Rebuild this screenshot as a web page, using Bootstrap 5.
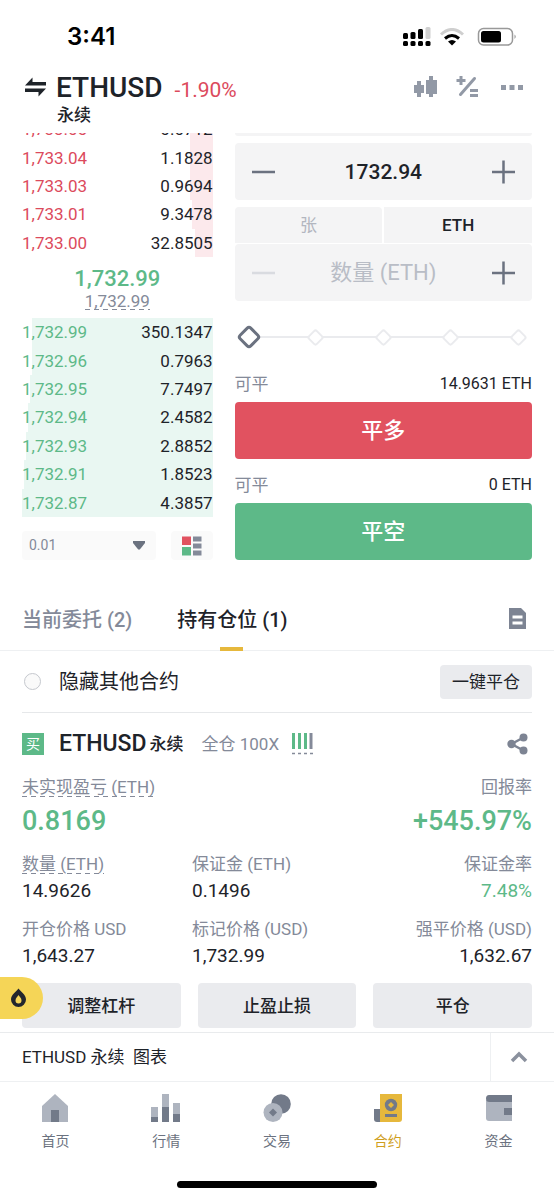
<!DOCTYPE html>
<html lang="zh-CN">
<head>
<meta charset="utf-8">
<meta name="viewport" content="width=device-width, initial-scale=1">
<title>ETHUSD 永续</title>
<link href="https://cdn.jsdelivr.net/npm/bootstrap@5.3.0/dist/css/bootstrap.min.css" rel="stylesheet">
<style>
  :root { --ink:#1e2329; --grey:#848a99; --slate:#6b7280; --up:#5db988; --down:#e15260; --gold:#e6b83c; --field:#f4f4f5; --chip:#eaebee; --line:#eef0f2; }
  body { font-family: Roboto, "Noto Sans CJK SC", sans-serif; font-size:17px; line-height:24px; color:var(--ink); background:#fff; }
  button, input, select { font-family:inherit; }
  svg { display:block; flex:none; }
  .px-page { padding-left:22px; padding-right:22px; }
  .t-grey { color:var(--grey); } .t-up { color:var(--up); } .t-down { color:#dc4a5c; }
  .bare { border:0; background:none; padding:0; color:inherit; }
  .statusbar { height:74px; padding:0 37px 0 67px; }
  .clock { font-family:Inter, sans-serif; font-weight:600; font-size:24px; color:#000; }
  .pair { font-size:28px; line-height:28px; font-weight:500; }
  .change { font-size:21px; line-height:24px; padding-top:4px; }
  .kind { line-height:26px; padding-left:35px; }

  .trade { display:grid; grid-template-columns: minmax(0,191fr) minmax(0,298fr); column-gap:22px; padding-top:5px; }
  .asks { height:124px; overflow:hidden; display:flex; flex-direction:column; justify-content:flex-end; }
  .asks .levels { height:142px; flex:none; }
  .bids .levels { height:199px; }
  .levels { display:flex; flex-direction:column; }
  .level { position:relative; flex:1 1 0; display:flex; align-items:center; justify-content:space-between; }
  .level span { position:relative; }
  .depth { position:absolute; top:0; bottom:0; right:0; }
  .asks .depth { background:#fce9ec; } .bids .depth { background:#e9f7f2; }
  .midprice { height:61px; padding-top:8px; }
  .midprice .last { font-size:22px; line-height:28px; font-weight:500; }
  .hint { display:inline-block; line-height:18px; padding-bottom:1px; background:repeating-linear-gradient(90deg, var(--grey) 0 5px, transparent 5px 9px) bottom / 100% 1px no-repeat; }
  .midprice .hint { line-height:16px; }
  .tools { margin-top:14px; gap:15px; }
  .tools select { height:29px; border:0; border-radius:4px; background-color:#fafafa; color:var(--grey); font-size:14px; padding:0 30px 0 7px; line-height:29px;
    background-image:url("data:image/svg+xml,%3csvg xmlns='http://www.w3.org/2000/svg' viewBox='0 0 12 9'%3e%3cpath d='M0 0h12v2L6.800 8.500H5.200L0 2z' fill='%236b7280'/%3e%3c/svg%3e"); background-position:right 11px center; background-size:12px 9px; background-repeat:no-repeat; appearance:none; }
  .tools button { width:42px; height:29px; background:#fafafa; border-radius:4px; }

  .strip { height:3px; background:var(--field); border-radius:0 0 4px 4px; margin-bottom:7px; }
  .stepper { height:57px; background:var(--field); border-radius:4px; padding:0 16px; }
  .stepper input { flex:1; min-width:0; border:0; background:none; text-align:center; font-size:21px; font-weight:500; color:var(--ink); outline:0; padding:0; }
  .stepper input::placeholder { color:#b9bdc6; font-size:22px; font-weight:400; opacity:1; }
  .units { height:36px; gap:2px; margin:7px 0 1px; }
  .units button { flex:1; background:var(--field); font-size:17px; color:#b2b6bf; }
  .units .on { color:var(--ink); font-weight:500; }
  .scale { position:relative; height:30px; margin:21px 0; padding:0 7px; }
  .rail { height:30px; background:linear-gradient(#eaebee,#eaebee) center / 100% 2px no-repeat; }
  .rail i { width:13px; height:13px; border:2px solid #eaebee; border-radius:3px; background:#fff; transform:rotate(45deg); }
  .scale input { position:absolute; left:5px; right:5px; top:0; width:calc(100% - 10px); height:30px; margin:0; appearance:none; background:none; }
  .scale input::-webkit-slider-runnable-track { height:18px; background:none; }
  .scale input::-webkit-slider-thumb { appearance:none; width:18px; height:18px; border:3px solid var(--slate); border-radius:4px; background:#fff; transform:rotate(45deg); }
  .avail { font-size:16px; line-height:22px; margin-bottom:7px; }
  .avail .t-grey { font-size:17px; }
  .order { height:57px; width:100%; border:0; border-radius:4px; color:#fff; font-size:22px; font-weight:500; display:block; }
  .order.long { background:var(--down); margin-bottom:15px; } .order.short { background:var(--up); }

  .sections { margin-top:30px; height:61px; border-bottom:1px solid var(--line); gap:45px; }
  .sections a { position:relative; display:flex; align-items:center; color:var(--grey); font-size:20px; text-decoration:none; font-weight:500; white-space:nowrap; }
  .sections a.active { color:var(--ink); }
  .sections a.active::after { content:""; position:absolute; left:50%; bottom:-1px; width:23px; height:4px; margin-left:-12px; background:var(--gold); }
  .filter { height:62px; margin:0 22px; border-bottom:1px solid #e6e8ea; }
  .filter input { appearance:none; width:17px; height:17px; margin:0 18px 0 2px; border:1px solid #c5c8ce; border-radius:50%; background:#fafafa; }
  .filter label { font-size:20px; }
  .chip { border:0; border-radius:4px; background:var(--chip); color:var(--ink); font-size:17px; }
  .filter .chip { height:34px; padding:0 12px; }
  .poshead { height:62px; }
  .side { width:22px; height:22px; line-height:22px; background:var(--up); color:#fff; font-size:14px; text-align:center; margin-right:15px; }
  .poshead h2 { font-size:23px; line-height:24px; font-weight:500; }
  .poshead .perp { font-weight:500; margin:0 18px 0 3px; }
  .leverage { margin-left:13px; }
  .big { font-size:27px; line-height:34px; font-weight:500; margin-top:5px; }
  .facts { display:grid; grid-template-columns:repeat(3,1fr); margin:0; white-space:nowrap; }
  .facts > div { margin-top:14px; }
  .facts > div:nth-child(3n) { text-align:right; }
  .facts dt { font-weight:400; color:var(--grey); }
  .facts dd { margin:3px 0 0; font-size:19px; }
  .actions { position:relative; margin-top:15px; padding-bottom:4px; gap:17px; }
  .actions .chip { flex:1; height:45px; font-weight:500; }
  .promo { position:absolute; left:0; top:-6px; width:43px; height:42px; border-radius:0 21px 21px 0; background:#f5d557; }
  .chartbar { border-top:1px solid #e9ebed; border-bottom:1px solid var(--line); height:50px; padding-left:22px; }
  .chartbar button { width:64px; border-left:1px solid var(--line); }
  .dock { padding-top:12px; }
  .dock a { flex:1 1 0; display:flex; flex-direction:column; align-items:center; gap:9px; font-size:14px; line-height:20px; color:var(--slate); text-decoration:none; }
  .dock a.active { color:#cf9e1d; }
  .homebar { width:36%; height:7px; border-radius:4px; background:#000; margin:30px auto 12px; }
</style>
</head>
<body>
<div class="statusbar d-flex align-items-center justify-content-between">
  <span class="clock">3:41</span>
  <div class="d-flex align-items-center">
    <svg width="28" height="20" viewBox="0 0 28 20"><g fill="#000"><rect x="0" y="6" width="5" height="6" rx="1.500"/><rect x="7.500" y="5" width="5" height="7" rx="1.500"/><rect x="15" y="2" width="5" height="10" rx="1.500"/><rect x="0" y="14" width="5" height="5" rx="1.500"/><rect x="7.500" y="14" width="5" height="5" rx="1.500"/><rect x="15" y="14" width="5" height="5" rx="1.500"/><rect x="22.500" y="14" width="5" height="5" rx="1.500"/></g><rect x="22.500" y="0" width="5" height="12" rx="1.500" fill="#d0d0d0"/></svg>
    <svg class="ms-2 me-1" width="26" height="18" viewBox="0 0 26 18"><g fill="none" stroke-width="3"><path d="M2 6.500Q13-3.500 24 6.500" stroke="#cfcfcf"/><path d="M6 10.500Q13 4.500 20 10.500" stroke="#000"/></g><path d="M9 13.500Q13 10.500 17 13.500L13 17.500Z"/></svg>
    <svg class="ms-2" width="40" height="20" viewBox="0 0 40 20"><rect x="1.500" y="1.500" width="34" height="16.500" rx="5" fill="none" stroke="#999" stroke-width="1.500"/><rect x="4" y="4" width="20" height="11.500" rx="2.500"/><path d="M37.500 7.500q2.500 2 0 4.500z" fill="#999"/></svg>
  </div>
</div>

<header class="px-page d-flex justify-content-between">
  <div>
    <div class="d-flex align-items-center">
      <svg width="26" height="24" viewBox="0 0 26 24" fill="#1e2329"><path d="M3 9.500 10.500 1.500V6H24v3.500zM24 12.500 16.500 20.500V16H3v-3.500z"/></svg>
      <h1 class="pair mb-0 ms-2">ETHUSD</h1>
      <span class="change t-down ms-2 ps-1">-1.90%</span>
    </div>
    <div class="kind fw-medium">永续</div>
  </div>
  <div class="d-flex align-items-start pe-2">
    <button class="bare" aria-label="K线"><svg width="28" height="28" viewBox="0 0 28 28" fill="#9299a6"><path d="M5 7h4v4h3v8H9v4H5v-4H2v-8h3zM17 2h4v4h4v14h-4v3h-4v-3h-3V6h3z"/></svg></button>
    <button class="bare ms-3" aria-label="计算器"><svg width="24" height="28" viewBox="0 0 24 28" fill="#9299a6"><path d="M3.500 2h3v3h3v3h-3v3h-3V8h-3V5h3zM14 15h8v3h-8zM14 20h8v3h-8z"/><path d="m4.500 20.500 14-16" stroke="#9299a6" stroke-width="3" stroke-linecap="round"/></svg></button>
    <button class="bare ms-3 ps-1" aria-label="更多"><svg width="24" height="28" viewBox="0 0 24 28" fill="#9299a6"><path d="M1 11h5v5H1zM9.500 11h5v5h-5zM18 11h5v5h-5z"/></svg></button>
  </div>
</header>

<main>
  <section class="trade px-page">
    <div>
      <div class="asks"><div class="levels">
        <div class="level"><i class="depth" style="width:12%"></i><span class="t-down">1,733.05</span><span>0.0712</span></div>
        <div class="level"><i class="depth" style="width:12%"></i><span class="t-down">1,733.04</span><span>1.1828</span></div>
        <div class="level"><i class="depth" style="width:12%"></i><span class="t-down">1,733.03</span><span>0.9694</span></div>
        <div class="level"><i class="depth" style="width:11%"></i><span class="t-down">1,733.01</span><span>9.3478</span></div>
        <div class="level"><i class="depth" style="width:9%"></i><span class="t-down">1,733.00</span><span>32.8505</span></div>
      </div></div>
      <div class="midprice text-center d-flex flex-column align-items-center">
        <span class="last t-up">1,732.99</span>
        <span class="hint t-grey">1,732.99</span>
      </div>
      <div class="bids"><div class="levels">
        <div class="level"><i class="depth" style="width:95%"></i><span class="t-up">1,732.99</span><span>350.1347</span></div>
        <div class="level"><i class="depth" style="width:95%"></i><span class="t-up">1,732.96</span><span>0.7963</span></div>
        <div class="level"><i class="depth" style="width:96%"></i><span class="t-up">1,732.95</span><span>7.7497</span></div>
        <div class="level"><i class="depth" style="width:97%"></i><span class="t-up">1,732.94</span><span>2.4582</span></div>
        <div class="level"><i class="depth" style="width:98%"></i><span class="t-up">1,732.93</span><span>2.8852</span></div>
        <div class="level"><i class="depth" style="width:99%"></i><span class="t-up">1,732.91</span><span>1.8523</span></div>
        <div class="level"><i class="depth" style="width:100%"></i><span class="t-up">1,732.87</span><span>4.3857</span></div>
      </div></div>
      <div class="tools d-flex">
        <select class="flex-fill" aria-label="价格精度"><option>0.01</option></select>
        <button class="bare d-flex align-items-center justify-content-center" aria-label="盘口布局"><svg width="20" height="20" viewBox="0 0 20 20"><path fill="#e15260" d="M0 .500h9v8.500H0z"/><path fill="#5db988" d="M0 11h9v8.500H0z"/><path fill="#848a99" d="M11 .500h8.500v5H11zM11 7.500h8.500v5H11zM11 14.500h8.500v5H11z"/></svg></button>
      </div>
    </div>

    <div>
      <div class="strip"></div>
      <div class="stepper d-flex align-items-center">
        <button class="bare" aria-label="降低价格"><svg width="24" height="24" stroke="#6b7280" stroke-width="2.500"><path d="M1 12h23"/></svg></button>
        <input type="text" value="1732.94" aria-label="价格">
        <button class="bare" aria-label="提高价格"><svg width="24" height="24" stroke="#6b7280" stroke-width="2.500"><path d="M0 12h23M11.500 .500v23"/></svg></button>
      </div>
      <div class="units d-flex">
        <button class="bare rounded-top-1">张</button>
        <button class="bare on">ETH</button>
      </div>
      <div class="stepper d-flex align-items-center">
        <button class="bare" aria-label="减少数量" disabled><svg width="24" height="24" stroke="#d9dbe0" stroke-width="2.500"><path d="M1 12h23"/></svg></button>
        <input type="text" placeholder="数量 (ETH)" aria-label="数量">
        <button class="bare" aria-label="增加数量"><svg width="24" height="24" stroke="#6b7280" stroke-width="2.500"><path d="M0 12h23M11.500 .500v23"/></svg></button>
      </div>
      <div class="scale">
        <div class="rail d-flex align-items-center justify-content-between"><i></i><i></i><i></i><i></i><i></i></div>
        <input type="range" min="0" max="100" value="0" aria-label="仓位比例">
      </div>
      <div class="avail d-flex justify-content-between"><span class="t-grey">可平</span><span>14.9631 ETH</span></div>
      <button class="order long">平多</button>
      <div class="avail d-flex justify-content-between"><span class="t-grey">可平</span><span>0 ETH</span></div>
      <button class="order short">平空</button>
    </div>
  </section>

  <nav class="sections px-page d-flex">
    <a href="#orders">当前委托 (2)</a>
    <a href="#positions" class="active">持有仓位 (1)</a>
    <button class="bare ms-auto" aria-label="历史记录"><svg width="28" height="28" viewBox="0 0 28 28"><path fill="#7d8493" d="M5 2h12l5 5v16H5z"/><path fill="#fff" d="M8.500 9.500h10v3h-10zM8.500 15.500h10v3h-10z"/></svg></button>
  </nav>

  <div class="filter d-flex align-items-center">
    <input type="checkbox" id="hideOthers"><label for="hideOthers">隐藏其他合约</label>
    <button class="chip ms-auto">一键平仓</button>
  </div>

  <article class="px-page" id="positions">
    <div class="poshead d-flex align-items-center">
      <span class="side">买</span>
      <h2 class="mb-0">ETHUSD</h2><span class="perp">永续</span>
      <span class="t-grey">全仓 100X</span>
      <svg class="leverage" width="21" height="24" viewBox="0 0 21 24"><path stroke="#5db988" stroke-width="3" d="M1.500 1v16M7.500 1v16M13.500 1v16"/><path stroke="#848a99" stroke-width="3" d="M19 1v16"/><path stroke="#848a99" stroke-width="1.500" stroke-dasharray="3 3" d="M0 21.500h21"/></svg>
      <button class="bare ms-auto me-1" aria-label="分享"><svg width="21" height="22" viewBox="0 0 21 22" fill="#7d8493"><path d="M16.500 4.500 4.500 11l12 6.500" fill="none" stroke="#7d8493" stroke-width="2.500"/><circle cx="4.500" cy="11" r="4.200"/><circle cx="16.500" cy="4.500" r="4"/><circle cx="16.500" cy="17.500" r="4"/></svg></button>
    </div>
    <div class="d-flex justify-content-between">
      <div><div class="t-grey"><span class="hint">未实现盈亏 (ETH)</span></div><div class="big t-up">0.8169</div></div>
      <div class="text-end"><div class="t-grey">回报率</div><div class="big t-up">+545.97%</div></div>
    </div>
    <dl class="facts">
      <div><dt><span class="hint">数量 (ETH)</span></dt><dd>14.9626</dd></div>
      <div><dt>保证金 (ETH)</dt><dd>0.1496</dd></div>
      <div><dt>保证金率</dt><dd class="t-up">7.48%</dd></div>
      <div><dt>开仓价格 USD</dt><dd>1,643.27</dd></div>
      <div><dt>标记价格 (USD)</dt><dd>1,732.99</dd></div>
      <div><dt>强平价格 (USD)</dt><dd>1,632.67</dd></div>
    </dl>
  </article>
  <div class="actions px-page d-flex">
    <button class="chip">调整杠杆</button>
    <button class="chip">止盈止损</button>
    <button class="chip">平仓</button>
    <a class="promo" href="#promo" aria-label="热门活动"><svg width="43" height="42" viewBox="0 0 43 42"><path fill="#23262d" fill-rule="evenodd" d="M18.500 11.500C21 15 26 17.500 26 22.500a7.500 7.500 0 0 1-15 0C11 17.500 16 15 18.500 11.500zM18.500 18c-1 2-3 3-3 5.500a3 3 0 0 0 6 0c0-2.500-2-3.500-3-5.500z"/></svg></a>
  </div>
</main>

<div class="chartbar d-flex align-items-stretch">
  <span class="align-self-center flex-fill">ETHUSD 永续&nbsp; 图表</span>
  <button class="bare d-flex align-items-center justify-content-center" aria-label="展开图表"><svg class="me-2" width="18" height="12" viewBox="0 0 18 12"><path d="m2 10 7-7 7 7" fill="none" stroke="#8b919e" stroke-width="3.500"/></svg></button>
</div>

<nav class="dock d-flex">
  <a href="#home"><svg width="28" height="28" viewBox="0 0 28 28"><path fill="#aeb4bf" d="M14 0 27 12v16H1V12z"/><path fill="#727a89" d="M10 16h8v12h-8z"/></svg>首页</a>
  <a href="#market"><svg width="30" height="28" viewBox="0 0 30 28"><path fill="#aeb4bf" d="M0 13h7v11H0zM11 0h7v13h-7zM22 9h7v12h-7z"/><path fill="#727a89" d="M0 23h7v5H0zM11 13h7v15h-7zM22 20h7v8h-7z"/></svg>行情</a>
  <a href="#trade"><svg width="28" height="28" viewBox="0 0 28 28"><circle cx="18" cy="10" r="9.800" fill="#727a89"/><circle cx="10" cy="18.500" r="9.500" fill="#aeb4bf"/><path fill="#727a89" d="m10 14.500 4 4-4 4-4-4z"/></svg>交易</a>
  <a href="#futures" class="active"><svg width="28" height="28" viewBox="0 0 28 28"><path fill="#727a89" d="M0 15h6v13H3q-3 0-3-3z"/><path fill="#e6b83c" d="M6 0h22v25q0 3-3 3H6z"/><circle cx="17" cy="11" r="6.200" fill="#727a89"/><path fill="#e6b83c" d="m17 8 3 3-3 3-3-3z"/><path fill="#727a89" d="M11 20h12v3H11z"/></svg>合约</a>
  <a href="#wallet"><svg width="28" height="28" viewBox="0 0 28 28"><path fill="#aeb4bf" d="M1 6h26v21H4q-3 0-3-3z"/><path fill="#727a89" d="M4 1h23v7H4.500Q1 8 1 4.500T4 1zM19 14h8v7h-8z"/></svg>资金</a>
</nav>
<div class="homebar"></div>
<script src="https://cdn.jsdelivr.net/npm/bootstrap@5.3.0/dist/js/bootstrap.bundle.min.js"></script>
</body>
</html>
